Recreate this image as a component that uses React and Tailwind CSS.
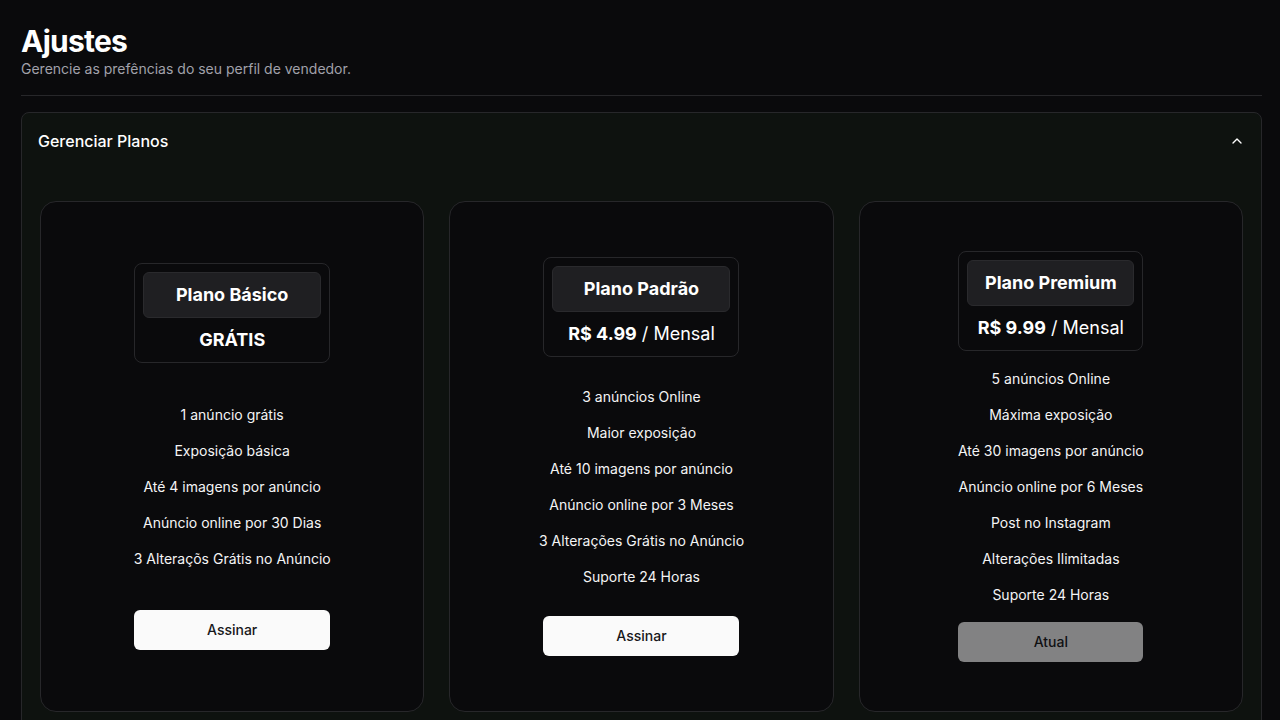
import { ChevronUp } from "lucide-react";

const plans = [
  {
    name: "Plano Básico",
    price: null,
    width: "w-[196px]",
    features: [
      "1 anúncio grátis",
      "Exposição básica",
      "Até 4 imagens por anúncio",
      "Anúncio online por 30 Dias",
      "3 Alteraçõs Grátis no Anúncio",
    ],
    current: false,
  },
  {
    name: "Plano Padrão",
    price: "4.99",
    width: "w-[196px]",
    features: [
      "3 anúncios Online",
      "Maior exposição",
      "Até 10 imagens por anúncio",
      "Anúncio online por 3 Meses",
      "3 Alterações Grátis no Anúncio",
      "Suporte 24 Horas",
    ],
    current: false,
  },
  {
    name: "Plano Premium",
    price: "9.99",
    width: "w-[185px]",
    features: [
      "5 anúncios Online",
      "Máxima exposição",
      "Até 30 imagens por anúncio",
      "Anúncio online por 6 Meses",
      "Post no Instagram",
      "Alterações Ilimitadas",
      "Suporte 24 Horas",
    ],
    current: true,
  },
];

function PlanCard({ plan }) {
  return (
    <div className="h-[511px] rounded-2xl border border-[#27272a] bg-[#0a0a0c] p-10">
      <div className={`mx-auto flex h-full flex-col justify-around ${plan.width}`}>
        <div className="rounded-lg border border-[#27272a] p-2 text-center">
          <div className="rounded-md border border-[#2a2a2d] bg-[#1f1f22] py-2 text-lg font-bold leading-7 text-white">
            {plan.name}
          </div>
          <div className="mt-2 whitespace-nowrap text-lg leading-7 text-white">
            {plan.price ? (
              <>
                <span className="font-bold">R$ {plan.price}</span> / Mensal
              </>
            ) : (
              <span className="font-bold">GRÁTIS</span>
            )}
          </div>
        </div>
        <ul className="flex flex-col items-center gap-4 pt-px text-center text-sm leading-5 text-[#f4f4f5]">
          {plan.features.map((f) => (
            <li key={f} className="whitespace-nowrap">{f}</li>
          ))}
        </ul>
        <button
          className={`h-10 rounded-md bg-[#fafafa] text-sm font-medium text-[#18181b] ${plan.current ? "opacity-50" : ""}`}
        >
          {plan.current ? "Atual" : "Assinar"}
        </button>
      </div>
    </div>
  );
}

export default function App() {
  return (
    <div className="min-h-screen bg-[#0a0a0c] pl-[21px] pr-[18px] pt-[23px] font-['Inter','Liberation_Sans',sans-serif] text-white">
      <h1 className="text-3xl font-bold leading-9 tracking-tight">Ajustes</h1>
      <p className="text-sm leading-5 text-[#a1a1aa]">Gerencie as prefências do seu perfil de vendedor.</p>
      <div className="mt-4 border-t border-[#27272a]" />

      <section className="mt-4 rounded-lg border border-[#27272a] bg-[#0e120f]">
        <div className="flex items-center justify-between py-4 pl-4 pr-4">
          <h2 className="text-base font-medium leading-6">Gerenciar Planos</h2>
          <ChevronUp className="h-4 w-4" strokeWidth={2} />
        </div>
        <div className="grid grid-cols-3 gap-[25px] px-[18px] pb-6 pt-8">
          {plans.map((p) => (
            <PlanCard key={p.name} plan={p} />
          ))}
        </div>
      </section>
    </div>
  );
}
